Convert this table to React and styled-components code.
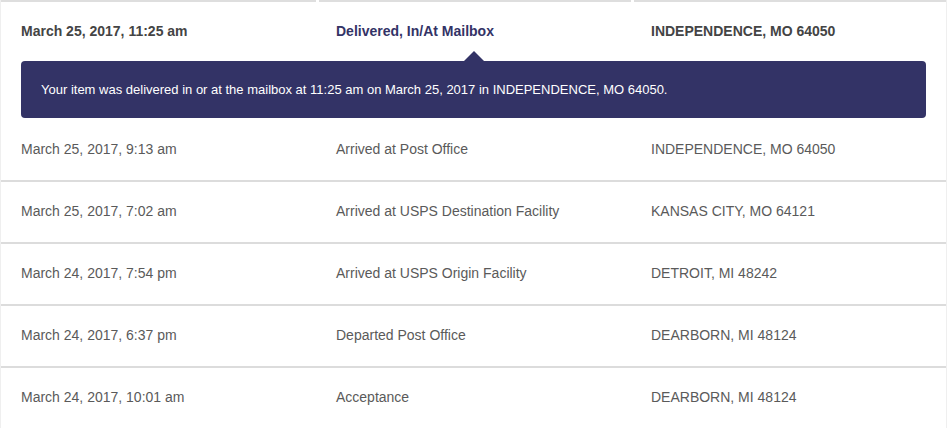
import React from 'react';
import styled, { createGlobalStyle } from 'styled-components';

const GlobalStyle = createGlobalStyle`
  html, body {
    margin: 0;
    padding: 0;
    background: #fff;
  }
  body {
    font-family: "Liberation Sans", Arial, Helvetica, sans-serif;
  }
`;

const events = [
  { date: 'March 25, 2017, 9:13 am', status: 'Arrived at Post Office', place: 'INDEPENDENCE, MO 64050' },
  { date: 'March 25, 2017, 7:02 am', status: 'Arrived at USPS Destination Facility', place: 'KANSAS CITY, MO 64121' },
  { date: 'March 24, 2017, 7:54 pm', status: 'Arrived at USPS Origin Facility', place: 'DETROIT, MI 48242' },
  { date: 'March 24, 2017, 6:37 pm', status: 'Departed Post Office', place: 'DEARBORN, MI 48124' },
  { date: 'March 24, 2017, 10:01 am', status: 'Acceptance', place: 'DEARBORN, MI 48124' },
];

const App = () => {
  return (
    <>
      <GlobalStyle />
      <History>
        <LatestRow>
          <Cell $first $top $bold>March 25, 2017, 11:25 am</Cell>
          <Cell $top $bold $accent>Delivered, In/At Mailbox</Cell>
          <Cell $top $bold>INDEPENDENCE, MO 64050</Cell>
        </LatestRow>
        <Detail>
          <DetailBox>
            Your item was delivered in or at the mailbox at 11:25 am on March 25, 2017 in INDEPENDENCE, MO 64050.
          </DetailBox>
        </Detail>
        {events.map((e) => (
          <Row key={e.date}>
            <Cell $first>{e.date}</Cell>
            <Cell>{e.status}</Cell>
            <Cell>{e.place}</Cell>
          </Row>
        ))}
      </History>
    </>
  );
};

export default App;

const History = styled.div`
  width: 947px;
  box-sizing: border-box;
  border-left: 1px solid #efefef;
  border-right: 1px solid #efefef;
  min-height: 428px;
`;

const Grid = styled.div`
  display: grid;
  grid-template-columns: 315px 312px 312px;
  column-gap: 3px;
`;

const LatestRow = styled(Grid)`
  padding-bottom: 12px;
`;

const Row = styled(Grid)`
  border-bottom: 2px solid #dcdcdc;
`;

const Cell = styled.div`
  box-sizing: border-box;
  padding: 21px 0 ${(p) => (p.$top ? '0' : '23px')} ${(p) => (p.$first ? '20px' : '17px')};
  border-top: ${(p) => (p.$top ? '2px solid #dedede' : 'none')};
  font-size: 14px;
  line-height: 16px;
  font-weight: ${(p) => (p.$bold ? 700 : 400)};
  color: ${(p) => (p.$accent ? '#333366' : p.$bold ? '#444' : '#5a5a5a')};
  white-space: nowrap;
`;

const Detail = styled.div`
  padding: 10px 20px 0 20px;
  margin-bottom: 2px;
`;

const DetailBox = styled.div`
  position: relative;
  background: #333366;
  color: #fff;
  border-radius: 4px;
  padding: 20px 20px;
  font-size: 13px;
  line-height: 17px;

  &::before {
    content: '';
    position: absolute;
    left: 50%;
    top: -10px;
    margin-left: -10px;
    border-left: 10px solid transparent;
    border-right: 10px solid transparent;
    border-bottom: 10px solid #333366;
  }
`;
